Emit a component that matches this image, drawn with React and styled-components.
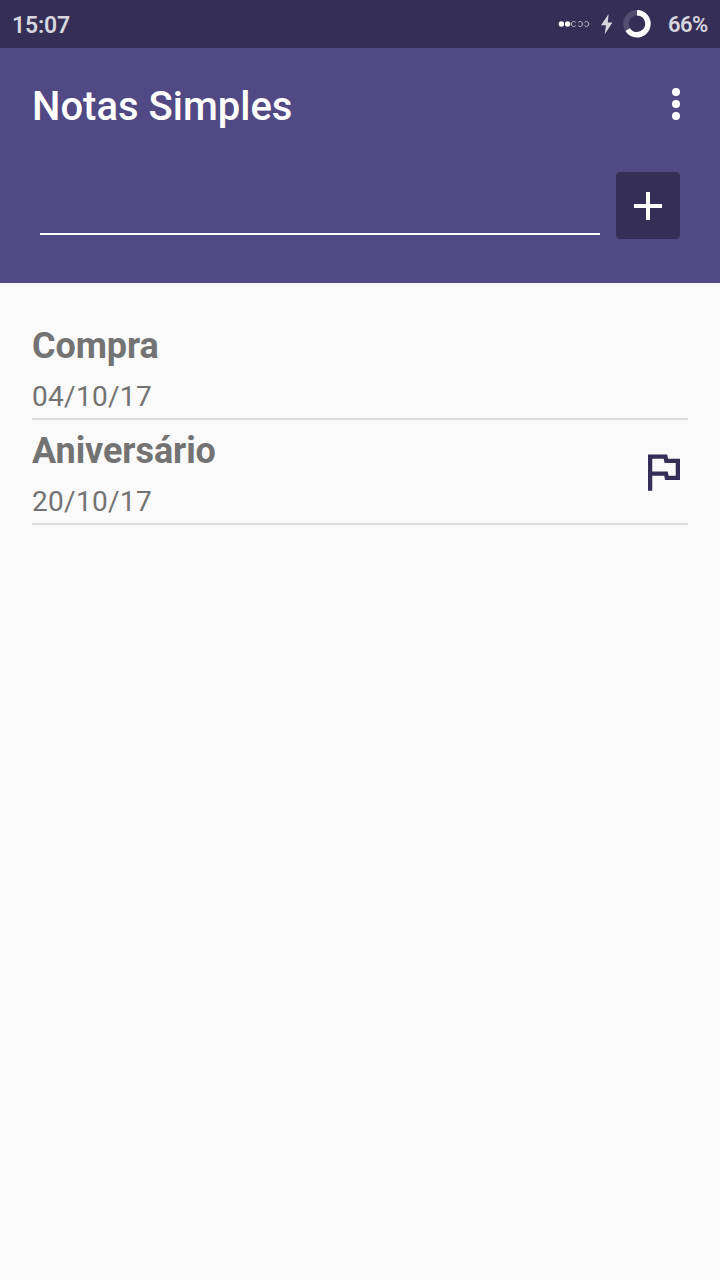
import React from 'react';
import styled, { createGlobalStyle } from 'styled-components';

const colors = {
  primary: '#514983',
  primaryDark: '#352f57',
  background: '#fafafa',
  text: '#737373',
  divider: '#dbdbdb',
  status: '#d7d5dd',
  white: '#ffffff',
};

const GlobalStyle = createGlobalStyle`
  * {
    box-sizing: border-box;
  }

  body {
    margin: 0;
    background-color: ${colors.background};
    font-family: Roboto, 'Liberation Sans', sans-serif;
  }
`;

const StyledScreen = styled.div`
  min-height: 1280px;
  width: 720px;
`;

const StyledStatusBar = styled.div`
  align-items: center;
  background-color: ${colors.primaryDark};
  color: ${colors.status};
  display: flex;
  font-weight: 600;
  height: 48px;
  justify-content: space-between;
  line-height: 28px;
  padding: 2px 13px 0 12px;
`;

const StyledClock = styled.span`
  font-size: 23px;
  letter-spacing: -0.2px;
  padding-top: 2px;
`;

const StyledIndicators = styled.div`
  align-items: center;
  display: flex;

  & svg {
    margin-top: -2px;
  }
`;

const StyledSignal = styled.svg`
  margin-right: 11px;
`;

const StyledBolt = styled.svg`
  margin-right: 10px;
`;

const StyledBattery = styled.svg`
  margin-right: 17px;
`;

const StyledPercent = styled.span`
  font-size: 22px;
  letter-spacing: -0.6px;
  margin-right: -0.6px;
`;

const StyledHeader = styled.header`
  background-color: ${colors.primary};
  height: 235px;
  padding: 33px 40px 0 32px;
`;

const StyledTitleRow = styled.div`
  align-items: center;
  display: flex;
  height: 52px;
  justify-content: space-between;
`;

const StyledTitle = styled.h1`
  color: ${colors.white};
  font-size: 40px;
  font-weight: 500;
  line-height: 52px;
  margin: 0;
`;

const StyledMenuButton = styled.button`
  background: none;
  border: 0;
  display: flex;
  height: 32px;
  margin-top: -6px;
  padding: 0;
`;

const StyledForm = styled.form`
  display: flex;
  gap: 16px;
  margin-top: 39px;
  padding-left: 8px;
`;

const StyledInput = styled.input`
  background: none;
  border: 0;
  border-bottom: 2px solid ${colors.white};
  color: ${colors.white};
  flex: 1;
  font: inherit;
  font-size: 36px;
  height: 63px;
  min-width: 0;
  outline: 0;
  padding: 0;
`;

const StyledAddButton = styled.button`
  align-items: center;
  background-color: ${colors.primaryDark};
  border: 0;
  border-radius: 4px;
  display: flex;
  height: 67px;
  justify-content: center;
  padding: 1px 0 0;
  width: 64px;
`;

const StyledNotes = styled.ul`
  list-style: none;
  margin: 0;
  padding: 32px 32px 0;
`;

const StyledNote = styled.li`
  align-items: center;
  border-bottom: 2px solid ${colors.divider};
  color: ${colors.text};
  display: flex;
  height: 105px;
  justify-content: space-between;
  padding-right: 8px;
`;

const StyledNoteBody = styled.div`
  padding-top: 5px;
`;

const StyledNoteTitle = styled.h2`
  font-size: 36px;
  font-weight: 700;
  letter-spacing: -0.08px;
  line-height: 48px;
  margin: 0 0 8px;
`;

const StyledNoteDate = styled.p`
  font-size: 28px;
  letter-spacing: 0.3px;
  line-height: 38px;
  margin: 0;
`;

const StyledFlag = styled.svg`
  margin-top: 2px;
`;

const notes = [
  { id: 1, title: 'Compra', date: '04/10/17', flagged: false },
  { id: 2, title: 'Aniversário', date: '20/10/17', flagged: true },
];

function StatusBar() {
  return (
    <StyledStatusBar>
      <StyledClock>15:07</StyledClock>
      <StyledIndicators>
        <StyledSignal width="32" height="8" viewBox="0 0 32 8">
          <circle cx="3.4" cy="4" r="2.7" fill={colors.white} />
          <circle cx="9.6" cy="4" r="2.7" fill={colors.white} />
          <g fill="none" stroke="#b9b6c6" strokeWidth="1">
            <path d="M17.6 2.3A2.5 2.5 0 1 0 17.6 5.7" />
            <path d="M20.3 2.3A2.5 2.5 0 1 1 20.3 5.7" />
            <path d="M26.5 2.3A2.5 2.5 0 1 1 26.5 5.7" />
          </g>
        </StyledSignal>
        <StyledBolt width="12" height="21" viewBox="0 0 12 21">
          <path d="M7.6 0L0 11.3H5L3.6 20.5L11.4 8.5H6.8Z" fill={colors.status} />
        </StyledBolt>
        <StyledBattery width="28" height="28" viewBox="0 0 28 28">
          <g fill="none" strokeWidth="5.4">
            <circle cx="14" cy="13.7" r="11" stroke="#534e70" />
            <circle
              cx="14"
              cy="13.7"
              r="11"
              stroke={colors.white}
              pathLength="100"
              strokeDasharray="66 34"
              transform="rotate(-90 14 13.7)"
            />
          </g>
        </StyledBattery>
        <StyledPercent>66%</StyledPercent>
      </StyledIndicators>
    </StyledStatusBar>
  );
}

function Header() {
  return (
    <StyledHeader>
      <StyledTitleRow>
        <StyledTitle>Notas Simples</StyledTitle>
        <StyledMenuButton aria-label="Menu">
          <svg width="8" height="32" viewBox="0 0 8 32" fill={colors.white}>
            <circle cx="4" cy="4" r="4" />
            <circle cx="4" cy="16" r="4" />
            <circle cx="4" cy="28" r="4" />
          </svg>
        </StyledMenuButton>
      </StyledTitleRow>
      <StyledForm onSubmit={(e) => e.preventDefault()}>
        <StyledInput aria-label="Nota" />
        <StyledAddButton aria-label="Adicionar">
          <svg width="28" height="28" viewBox="0 0 28 28">
            <path d="M14 0V28M0 14H28" stroke={colors.white} strokeWidth="4" />
          </svg>
        </StyledAddButton>
      </StyledForm>
    </StyledHeader>
  );
}

function Note({ note }) {
  return (
    <StyledNote>
      <StyledNoteBody>
        <StyledNoteTitle>{note.title}</StyledNoteTitle>
        <StyledNoteDate>{note.date}</StyledNoteDate>
      </StyledNoteBody>
      {note.flagged && (
        <StyledFlag width="32" height="37" viewBox="5 3.8 15 17.3">
          <path
            d="M12.36 6l.4 2H18v6h-3.36l-.4-2H7V6h5.36M14 4H5v17h2v-7h5.6l.4 2h7V6h-5.6L14 4z"
            fill={colors.primaryDark}
          />
        </StyledFlag>
      )}
    </StyledNote>
  );
}

function App() {
  return (
    <>
      <GlobalStyle />
      <StyledScreen>
        <StatusBar />
        <Header />
        <StyledNotes>
          {notes.map((note) => (
            <Note key={note.id} note={note} />
          ))}
        </StyledNotes>
      </StyledScreen>
    </>
  );
}

export default App;
